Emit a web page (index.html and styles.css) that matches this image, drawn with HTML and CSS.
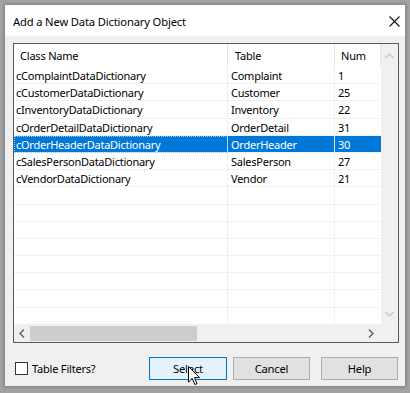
FILE: index.html
```html
<!DOCTYPE html>
<html lang="en">
<head>
    <meta charset="UTF-8">
    <title>Add a New Data Dictionary Object</title>
    <link rel="stylesheet" href="styles.css">
</head>
<body>
    <div class="dialog">
        <div class="titlebar">
            <span class="title">Add a New Data Dictionary Object</span>
            <svg class="close" width="11" height="11" viewBox="0 0 11 11">
                <path d="M0.5 0.5 L10.5 10.5 M10.5 0.5 L0.5 10.5" stroke="#111" stroke-width="1.1" fill="none"/>
            </svg>
        </div>

        <div class="content">
            <!-- list of classes -->
            <div class="listbox">
                <div class="view">
                    <div class="grid">
                        <div class="hd">Class Name</div>
                        <div class="hd">Table</div>
                        <div class="hd">Num</div>

                        <div class="cell">cComplaintDataDictionary</div><div class="cell">Complaint</div><div class="cell">1</div>
                        <div class="cell">cCustomerDataDictionary</div><div class="cell">Customer</div><div class="cell">25</div>
                        <div class="cell">cInventoryDataDictionary</div><div class="cell">Inventory</div><div class="cell">22</div>
                        <div class="cell">cOrderDetailDataDictionary</div><div class="cell">OrderDetail</div><div class="cell">31</div>
                        <div class="cell sel focus">cOrderHeaderDataDictionary</div><div class="cell sel">OrderHeader</div><div class="cell sel">30</div>
                        <div class="cell">cSalesPersonDataDictionary</div><div class="cell">SalesPerson</div><div class="cell">27</div>
                        <div class="cell">cVendorDataDictionary</div><div class="cell">Vendor</div><div class="cell">21</div>

                        <div class="cell"></div><div class="cell"></div><div class="cell"></div>
                        <div class="cell"></div><div class="cell"></div><div class="cell"></div>
                        <div class="cell"></div><div class="cell"></div><div class="cell"></div>
                        <div class="cell"></div><div class="cell"></div><div class="cell"></div>
                        <div class="cell"></div><div class="cell"></div><div class="cell"></div>
                        <div class="cell"></div><div class="cell"></div><div class="cell"></div>
                        <div class="cell"></div><div class="cell"></div><div class="cell"></div>
                        <div class="cell"></div><div class="cell"></div><div class="cell"></div>
                    </div>
                    <div class="vscroll">
                        <svg width="9" height="6" viewBox="0 0 9 6"><path d="M0.5 5 L4.5 1 L8.5 5" stroke="#c4c4c4" stroke-width="1.2" fill="none"/></svg>
                        <svg width="9" height="6" viewBox="0 0 9 6"><path d="M0.5 1 L4.5 5 L8.5 1" stroke="#c4c4c4" stroke-width="1.2" fill="none"/></svg>
                    </div>
                </div>
                <div class="hscroll">
                    <svg class="arrow" width="6" height="9" viewBox="0 0 6 9"><path d="M5 0.5 L1 4.5 L5 8.5" stroke="#606060" stroke-width="1.4" fill="none"/></svg>
                    <div class="track"><div class="thumb"></div></div>
                    <svg class="arrow" width="6" height="9" viewBox="0 0 6 9"><path d="M1 0.5 L5 4.5 L1 8.5" stroke="#606060" stroke-width="1.4" fill="none"/></svg>
                    <div class="corner"></div>
                </div>
            </div>

            <div class="footer">
                <label class="check"><span class="box"></span>Table Filters?</label>
                <button class="btn default">Select</button>
                <button class="btn cancel">Cancel</button>
                <button class="btn help">Help</button>
            </div>
        </div>

        <svg class="cursor" width="13" height="20" viewBox="0 0 13 20">
            <path d="M0.5 0.5 L0.5 16 L4.2 12.4 L6.8 18.5 L9 17.6 L6.5 11.6 L11.5 11.6 Z" fill="#fff" stroke="#000" stroke-width="1"/>
        </svg>
    </div>
</body>
</html>
```

FILE: styles.css
```css
* {
    box-sizing: border-box;
}
body {
    margin: 0;
    padding: 4px;
    width: 410px;
    height: 393px;
    background: #a2a2a2;
    font-family: 'Noto Sans', sans-serif;
    font-size: 11px;
    color: #000;
    overflow: hidden;
}
.dialog {
    position: relative;
    width: 402px;
    height: 383px;
    background: #f0f0f0;
    border: 1px solid #8c8c8c;
    box-shadow: 0 0 3px rgba(0, 0, 0, 0.25);
}
.titlebar {
    height: 31px;
    background: #fff;
    display: flex;
    align-items: center;
    padding: 0 5px 0 8px;
}
.title {
    flex: 1;
    font-size: 11.2px;
    letter-spacing: -0.15px;
    padding-top: 1px;
}
.close {
    margin-top: 1px;
}
.content {
    padding: 7px 6px 0 8px;
}
.listbox {
    width: 386px;
    height: 300px;
    border: 1px solid #5a5a5a;
    background: #fff;
    display: flex;
    flex-direction: column;
}
.view {
    display: flex;
    height: 281px;
}
.grid {
    width: 367px;
    display: grid;
    grid-template-columns: 214px 107px 1fr;
    grid-template-rows: 23px repeat(15, 17.2px);
    overflow: hidden;
}
.hd {
    padding: 0 0 0 6px;
    line-height: 23px;
    border-right: 1px solid #e5e5e5;
    white-space: nowrap;
    letter-spacing: -0.2px;
}
.hd:nth-child(2) {
    padding-left: 7px;
}
.cell {
    padding: 0 0 0 2px;
    line-height: 17px;
    border-right: 1px solid #f0f0f0;
    border-bottom: 1px solid #f0f0f0;
    white-space: nowrap;
    overflow: hidden;
    letter-spacing: -0.25px;
}
.cell:nth-child(3n+2) {
    padding-left: 3px;
}
.cell:nth-child(3n) {
    padding-left: 3px;
    border-right: none;
}
.cell.sel {
    background: #0078d7;
    color: #fff;
    border-right-color: #cfe4f7;
}
.cell.focus {
    outline: 1px dotted #9cc8ee;
    outline-offset: -1px;
}
.vscroll {
    width: 17px;
    background: #f0f0f0;
    display: flex;
    flex-direction: column;
    justify-content: space-between;
    align-items: center;
    padding: 9px 0 8px;
}
.hscroll {
    height: 17px;
    background: #f0f0f0;
    display: flex;
    align-items: center;
}
.hscroll .arrow {
    margin: 0 5px 0 5px;
}
.track {
    flex: 1;
    height: 17px;
    display: flex;
    align-items: center;
}
.thumb {
    width: 167px;
    height: 15px;
    background: #cdcdcd;
}
.corner {
    width: 17px;
    height: 17px;
    background: #f0f0f0;
    margin-left: 2px;
}
.footer {
    display: flex;
    align-items: center;
    padding-top: 14px;
}
.check {
    flex: 1;
    display: flex;
    align-items: center;
    margin-left: 2px;
    letter-spacing: -0.2px;
}
.box {
    width: 13px;
    height: 13px;
    border: 1px solid #333;
    background: #fff;
    margin-right: 4px;
}
.btn {
    width: 78px;
    height: 23px;
    font-family: inherit;
    font-size: 11.2px;
    color: #000;
    background: #e1e1e1;
    border: 1px solid #adadad;
    padding: 0;
    letter-spacing: -0.2px;
}
.btn.default {
    background: #e5f1fb;
    border-color: #0078d7;
}
.btn.cancel {
    margin-left: 6px;
    width: 77px;
}
.btn.help {
    margin-left: 11px;
    width: 77px;
    margin-right: 1px;
}
.cursor {
    position: absolute;
    left: 183px;
    top: 361px;
}
```
